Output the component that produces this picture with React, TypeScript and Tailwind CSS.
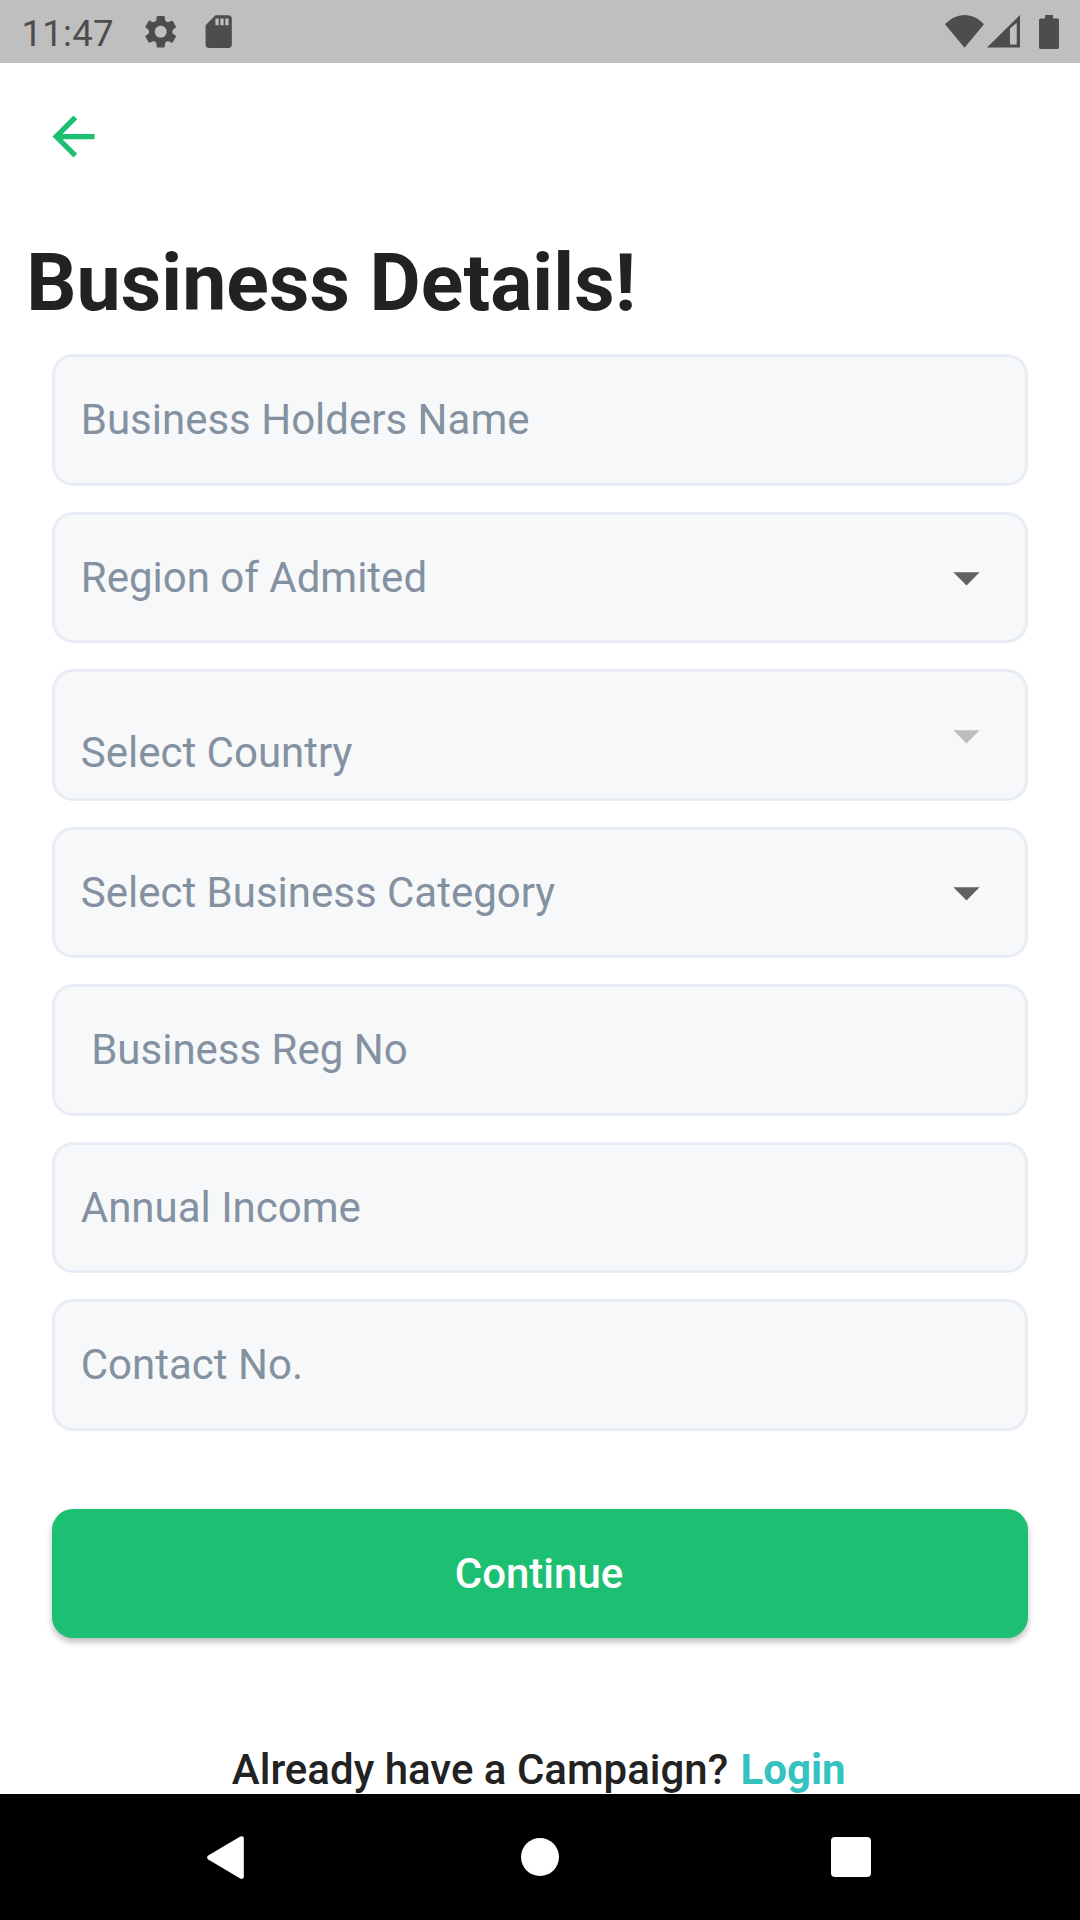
import { MdArrowBack, MdArrowDropDown, MdSdCard, MdSettings } from "react-icons/md";

type Field = {
  label: string;
  arrow?: "enabled" | "disabled";
  lowered?: boolean;
};

const fields: Field[] = [
  { label: "Business Holders Name" },
  { label: "Region of Admited", arrow: "enabled" },
  { label: "Select Country", arrow: "disabled", lowered: true },
  { label: "Select Business Category", arrow: "enabled" },
  { label: " Business Reg No" },
  { label: "Annual Income" },
  { label: "Contact No." },
];

function StatusBar() {
  return (
    <header className="flex h-[63px] shrink-0 items-center bg-[#bfbfbf] text-[#4d4d4d]">
      <span className="ml-[21.5px] w-[119.5px] pt-[3px] text-[36.75px] leading-[43px] tracking-[0.15px]">11:47</span>
      <MdSettings className="size-[39.4px]" />
      <MdSdCard className="ml-[19px] size-[39.4px]" />
      <div className="ml-auto flex items-center">
        <svg className="h-[33px] w-[39px]" viewBox="0 0 39 33" fill="currentColor">
          <path d="M0 9.3C5.5 3.6 12 0 19.5 0S33.500 3.600 39 9.300L19.500 32.700Z" />
        </svg>
        <svg className="ml-[3px] h-[33px] w-[33px]" viewBox="0 0 33 33" fill="currentColor">
          <path fillRule="evenodd" d="M0 32.500L33 0V32.500ZM23 13.500V29.500H29.700V7.800Z" />
        </svg>
        <svg className="mr-[21px] ml-[19px] h-[34px] w-5" viewBox="0 0 20 34" fill="currentColor">
          <path d="M6 0H14V3.500H18.500Q20 3.500 20 5V32.300Q20 34 18.500 34H1.500Q0 34 0 32.300V5Q0 3.500 1.500 3.500H6Z" />
        </svg>
      </div>
    </header>
  );
}

function FormField({ label, arrow, lowered }: Field) {
  return (
    <div className="flex h-[131.25px] items-center justify-between rounded-[21px] border-[3px] border-[#e8ecf4] bg-[#f7f8f9] pr-[27px] pl-[25.75px]">
      <span
        className={
          lowered
            ? "pt-[34.2px] text-[42px] leading-[49px] whitespace-pre text-[#8391a1]"
            : "pb-[0.8px] text-[42px] leading-[49px] whitespace-pre text-[#8391a1]"
        }
      >
        {label}
      </span>
      {arrow && (
        <MdArrowDropDown
          className={arrow === "enabled" ? "size-[63px] text-[#616161]" : "size-[63px] text-[#bdbdbd]"}
        />
      )}
    </div>
  );
}

function NavigationBar() {
  return (
    <nav className="flex h-[126px] shrink-0 items-center bg-black text-white">
      <svg className="ml-[207px] h-[43px] w-[37px]" viewBox="0 0 37 43" fill="currentColor">
        <path d="M1.200 19.500L33.300.600Q36.800-.800 36.800 2.500V40.500Q36.800 43.800 33.300 42.400L1.200 23.500Q-1 21.500 1.200 19.500Z" />
      </svg>
      <div className="ml-[277px] size-[38px] rounded-full bg-white" />
      <div className="ml-[272px] size-10 rounded-[4px] bg-white" />
    </nav>
  );
}

export default function App() {
  return (
    <div className="flex h-[1920px] w-[1080px] flex-col overflow-hidden bg-white font-[Roboto,sans-serif] text-[#222222]">
      <StatusBar />
      <main className="flex min-h-0 flex-1 flex-col overflow-hidden">
        <button className="mt-[42px] ml-[42px] size-[63px] text-[#1dbf73]" aria-label="Back">
          <MdArrowBack className="size-[63px]" />
        </button>
        <h1 className="mt-[69px] ml-[26.25px] text-[78.75px] leading-[92px] font-bold tracking-[0.06px]">
          Business Details!
        </h1>
        <form className="mx-[52px] mt-[25.4px] flex flex-col gap-[26.25px]">
          {fields.map((field) => (
            <FormField key={field.label} {...field} />
          ))}
          <button
            type="button"
            className="mt-[52.2px] h-[129px] rounded-[21px] bg-[#1dbf73] pr-[2px] pb-[0.6px] text-[42px] leading-[49px] font-medium text-white shadow-[0_4px_6px_rgba(0,0,0,0.26)]"
          >
            Continue
          </button>
        </form>
        <p className="mt-[107.4px] pr-[2.5px] text-center text-[42px] leading-[49px] font-medium whitespace-nowrap">
          Already have a Campaign? <a className="ml-[2px] font-bold text-[#35c2c1]">Login</a>
        </p>
      </main>
      <NavigationBar />
    </div>
  );
}
